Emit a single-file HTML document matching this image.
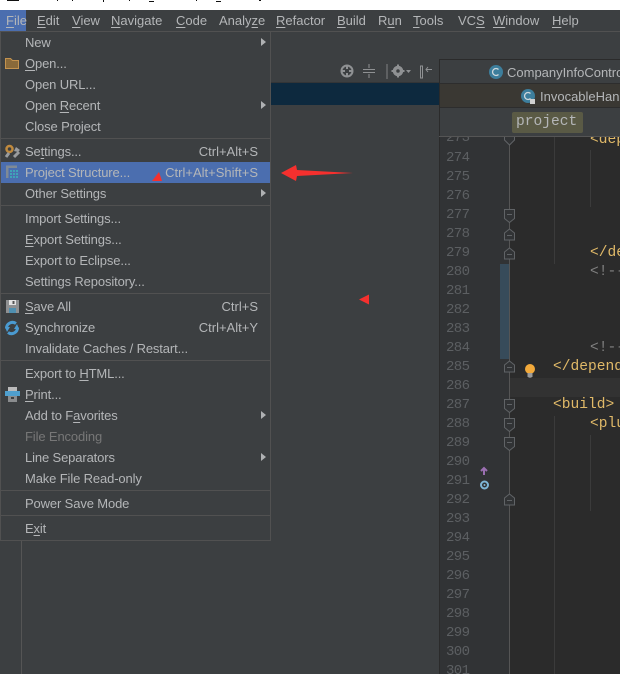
<!DOCTYPE html>
<html><head><meta charset="utf-8"><style>
html,body{margin:0;padding:0;background:#3c3f41}
#p{position:relative;width:620px;height:674px;overflow:hidden;background:#3c3f41;font-family:"Liberation Sans",sans-serif;font-size:13px;color:#b4b6b8}
#p div{position:absolute}
.m{top:13px;line-height:16px;white-space:nowrap}
.i{left:25px;line-height:16px;white-space:nowrap;letter-spacing:-.13px}
.r{line-height:16px;white-space:nowrap}
.s{left:1px;width:269px;height:1px;background:#515151}
.a{left:261px;width:0;height:0;border-left:5px solid #afb1b3;border-top:4px solid transparent;border-bottom:4px solid transparent}
u{text-underline-offset:2px}
.n{left:446px;width:30px;font:14px/19px "Liberation Mono",monospace;letter-spacing:-.6px;color:#5c5f62;height:19px}
.c{font:14.6px/19px "Liberation Mono",monospace;color:#e0b968;white-space:pre;height:19px}
.g{color:#808080}
.k{background:#111;height:1px}
</style></head><body><div id="p">
<div style="left:0;top:0;width:620px;height:10px;background:#fff"></div>
<div class="k" style="left:7px;top:0;width:12px"></div>
<div class="k" style="left:57px;top:0;width:1px"></div>
<div class="k" style="left:72px;top:0;width:1px"></div>
<div class="k" style="left:103px;top:0;width:1px;height:2px"></div>
<div class="k" style="left:129px;top:0;width:1px"></div>
<div class="k" style="left:149px;top:1px;width:5px"></div>
<div class="k" style="left:196px;top:0;width:1px"></div>
<div class="k" style="left:216px;top:1px;width:5px"></div>
<div class="k" style="left:259px;top:0;width:2px"></div>
<div style="left:0;top:10px;width:26px;height:21px;background:#4b6eaf"></div>
<div style="left:0;top:31px;width:620px;height:1px;background:#515151"></div>
<div class="m" style="left:6px"><u>F</u>ile</div>
<div class="m" style="left:37px"><u>E</u>dit</div>
<div class="m" style="left:72px"><u>V</u>iew</div>
<div class="m" style="left:111px"><u>N</u>avigate</div>
<div class="m" style="left:176px"><u>C</u>ode</div>
<div class="m" style="left:219px">Analy<u>z</u>e</div>
<div class="m" style="left:276px"><u>R</u>efactor</div>
<div class="m" style="left:337px"><u>B</u>uild</div>
<div class="m" style="left:378px">R<u>u</u>n</div>
<div class="m" style="left:413px"><u>T</u>ools</div>
<div class="m" style="left:458px">VC<u>S</u></div>
<div class="m" style="left:493px"><u>W</u>indow</div>
<div class="m" style="left:552px"><u>H</u>elp</div>

<!-- toolbar and dark selected row -->
<div style="left:270px;top:82px;width:170px;height:1px;background:#333537"></div>
<div style="left:271px;top:83px;width:168px;height:22px;background:#0d293e"></div>
<svg style="position:absolute;left:335px;top:60px" width="100" height="22" fill="none" stroke="#8f9193" stroke-width="2">
<circle cx="12" cy="11" r="5.500"/><path d="M12 6v3M12 13v3M7 11h3M14 11h3"/>
<path stroke-width="1" d="M28 9.500h12M28 12.500h12M34 4v4M34 14v4"/>
<path d="M52 4v15" stroke="#5e6062"/>
<circle cx="63" cy="11" r="3.500" stroke-width="3.500"/><path d="M63 4.500v2M63 15.500v2M56.500 11h2M67.500 11h2"/>
<path d="M71 10h5l-2.500 3z" fill="#8f9193" stroke="none"/>
<path stroke-width="1" d="M85.500 6v12h2v-12zM97 9.500h-6M93 7l-2 2.500 2 2.500"/>
</svg>

<!-- editor -->
<div style="left:439px;top:59px;width:1px;height:615px;background:#2b2b2b"></div>
<div style="left:440px;top:59px;width:180px;height:24px;background:#3c3f41;border-top:1px solid #2b2b2b"></div>
<div style="left:440px;top:83px;width:180px;height:25px;background:#3a3833;border-top:1px solid #2d2d2d;border-bottom:1px solid #2d2d2d;box-sizing:border-box"></div>
<div style="left:440px;top:137px;width:70px;height:537px;background:#313335"></div>
<div style="left:510px;top:137px;width:110px;height:537px;background:#2b2b2b"></div>
<div style="left:510px;top:378px;width:110px;height:19px;background:#323232"></div>
<div style="left:500px;top:264px;width:9px;height:95px;background:#374b5a"></div>
<div style="left:509px;top:137px;width:1px;height:537px;background:#555"></div>
<div style="left:554px;top:137px;width:1px;height:127px;background:#3b3b3b"></div>
<div style="left:554px;top:416px;width:1px;height:258px;background:#3b3b3b"></div>
<div style="left:590px;top:150px;width:1px;height:57px;background:#3b3b3b"></div>
<div style="left:590px;top:435px;width:1px;height:76px;background:#3b3b3b"></div>

<svg style="position:absolute;left:480px;top:60px" width="60" height="50">
<circle cx="16" cy="12" r="7" fill="#3d7e9c"/><path d="M18.500 9.500a3.500 3.500 0 1 0 0 5" fill="none" stroke="#cfd8dc" stroke-width="1.300"/>
<circle cx="48" cy="36" r="7" fill="#3d7e9c"/><path d="M50.500 33.500a3.500 3.500 0 1 0 0 5" fill="none" stroke="#cfd8dc" stroke-width="1.300"/>
<rect x="50" y="39" width="5" height="5" fill="#d0d0d0"/>
</svg>
<div style="left:507px;top:65px;line-height:16px;white-space:nowrap;width:113px;overflow:hidden">CompanyInfoControl</div>
<div style="left:540px;top:89px;line-height:16px;white-space:nowrap;width:80px;overflow:hidden">InvocableHandler</div>

<div class="n" style="top:129px">273</div>
<div class="n" style="top:149px">274</div><div class="n" style="top:168px">275</div><div class="n" style="top:187px">276</div>
<div class="n" style="top:206px">277</div><div class="n" style="top:225px">278</div><div class="n" style="top:244px">279</div>
<div class="n" style="top:263px">280</div><div class="n" style="top:282px">281</div><div class="n" style="top:301px">282</div>
<div class="n" style="top:320px">283</div><div class="n" style="top:339px">284</div><div class="n" style="top:358px">285</div>
<div class="n" style="top:377px">286</div><div class="n" style="top:396px">287</div><div class="n" style="top:415px">288</div>
<div class="n" style="top:434px">289</div><div class="n" style="top:453px">290</div><div class="n" style="top:472px">291</div>
<div class="n" style="top:491px">292</div><div class="n" style="top:510px">293</div><div class="n" style="top:529px">294</div>
<div class="n" style="top:548px">295</div><div class="n" style="top:567px">296</div><div class="n" style="top:586px">297</div>
<div class="n" style="top:605px">298</div><div class="n" style="top:624px">299</div><div class="n" style="top:643px">300</div>
<div class="n" style="top:662px">301</div>

<div class="c" style="left:590px;top:131px">&lt;dep</div>
<div class="c" style="left:590px;top:244px">&lt;/de</div>
<div class="c g" style="left:590px;top:263px">&lt;!--</div>
<div class="c g" style="left:590px;top:339px">&lt;!--</div>
<div class="c" style="left:553px;top:358px">&lt;/depend</div>
<div class="c" style="left:553px;top:396px">&lt;build&gt;</div>
<div class="c" style="left:590px;top:415px">&lt;plu</div>

<!-- breadcrumb sits above the scrolled code -->
<div style="left:440px;top:108px;width:180px;height:28px;background:#3c3f41"></div>
<div style="left:439px;top:136px;width:181px;height:1px;background:#555"></div>
<div style="left:512px;top:112px;width:71px;height:21px;background:#5a5a45;border-radius:2px"></div>
<div style="left:516px;top:113px;font:14.6px/19px 'Liberation Mono',monospace;color:#b4b6b8">project</div>

<svg style="position:absolute;left:475px;top:130px" width="50" height="380" fill="#313335" stroke="#606366">
<path d="M29.500 7v3l5 5 5-5V7"/>
<path d="M29.500 79.500h10v9l-5 4-5-4zM32 84.500h5"/>
<path d="M34.500 99l5 4v7h-10v-7zM32 105.500h5"/>
<path d="M34.500 118l5 4v7h-10v-7zM32 124.500h5"/>
<path d="M34.500 231l5 4v7h-10v-7zM32 237.500h5"/>
<path d="M29.500 269.500h10v9l-5 4-5-4zM32 274.500h5"/>
<path d="M29.500 288.500h10v9l-5 4-5-4zM32 293.500h5"/>
<path d="M29.500 307.500h10v9l-5 4-5-4zM32 312.500h5"/>
<path d="M34.500 364l5 4v7h-10v-7zM32 370.500h5"/>
<path d="M9 345v-6M6 341l3-3 3 3" fill="none" stroke="#9a6fb0" stroke-width="2"/>
<circle cx="9.500" cy="355" r="3.500" fill="none" stroke="#7fb6d6" stroke-width="2"/><circle cx="9.500" cy="355" r="1" fill="#7fb6d6" stroke="none"/>
</svg>
<svg style="position:absolute;left:522px;top:362px" width="16" height="18">
<circle cx="8" cy="7" r="5" fill="#f2a93b"/><rect x="5.500" y="11" width="5" height="4" fill="#9a9a9a"/><rect x="6.500" y="15" width="3" height="1" fill="#777"/>
</svg>

<div style="left:21px;top:540px;width:1px;height:134px;background:#555"></div>
<!-- menu -->
<div style="left:0;top:31px;width:269px;height:508px;background:#3c3f41;border:1px solid #515151"></div>
<div class="i" style="top:35px">New</div><div class="a" style="top:38px"></div>
<div class="i" style="top:56px"><u>O</u>pen...</div>
<div class="i" style="top:77px">Open URL...</div>
<div class="i" style="top:98px">Open <u>R</u>ecent</div><div class="a" style="top:101px"></div>
<div class="i" style="top:119px">Close Project</div>
<div class="s" style="top:138px"></div>
<div class="i" style="top:144px">Se<u>t</u>tings...</div><div class="r" style="top:144px;right:362px">Ctrl+Alt+S</div>
<div style="left:1px;top:162px;width:269px;height:21px;background:#4b6eaf"></div>
<div class="i" style="top:165px">Project Structure...</div><div class="r" style="top:165px;right:362px">Ctrl+Alt+Shift+S</div>
<div class="i" style="top:186px">Other Settings</div><div class="a" style="top:189px"></div>
<div class="s" style="top:205px"></div>
<div class="i" style="top:211px">Import Settings...</div>
<div class="i" style="top:232px"><u>E</u>xport Settings...</div>
<div class="i" style="top:253px">Export to Eclipse...</div>
<div class="i" style="top:274px">Settings Repository...</div>
<div class="s" style="top:293px"></div>
<div class="i" style="top:299px"><u>S</u>ave All</div><div class="r" style="top:299px;right:362px">Ctrl+S</div>
<div class="i" style="top:320px">S<u>y</u>nchronize</div><div class="r" style="top:320px;right:362px">Ctrl+Alt+Y</div>
<div class="i" style="top:341px">Invalidate Caches / Restart...</div>
<div class="s" style="top:360px"></div>
<div class="i" style="top:366px">Export to <u>H</u>TML...</div>
<div class="i" style="top:387px"><u>P</u>rint...</div>
<div class="i" style="top:408px">Add to F<u>a</u>vorites</div><div class="a" style="top:411px"></div>
<div class="i" style="top:429px;color:#777">File Encoding</div>
<div class="i" style="top:450px">Line Separators</div><div class="a" style="top:453px"></div>
<div class="i" style="top:471px">Make File Read-only</div>
<div class="s" style="top:490px"></div>
<div class="i" style="top:496px">Power Save Mode</div>
<div class="s" style="top:515px"></div>
<div class="i" style="top:521px">E<u>x</u>it</div>

<svg style="position:absolute;left:0;top:0" width="24" height="410">
<!-- open -->
<path d="M5.500 58.500h5l2 2h6v8h-13z" fill="#8a6a3a" stroke="#c4934f"/>
<!-- settings -->
<path d="M14 157l5-5" stroke="#9a9c9e" stroke-width="3" fill="none"/>
<path d="M16 147l4 3-2 2-4-1z" fill="#9a9c9e"/>
<circle cx="9.500" cy="149" r="3" fill="none" stroke="#c08a3e" stroke-width="2.500"/>
<path d="M6 157l3-4" stroke="#9a9c9e" stroke-width="3"/>
<!-- project structure -->
<path d="M6 178v-12.500h11v2.500H8.500v10z" fill="#7f8a96"/>
<g fill="#3fa3b8"><rect x="10" y="170" width="2" height="2"/><rect x="13" y="170" width="2" height="2"/><rect x="16" y="170" width="2" height="2"/><rect x="10" y="173" width="2" height="2"/><rect x="13" y="173" width="2" height="2"/><rect x="16" y="173" width="2" height="2"/><rect x="10" y="176" width="2" height="2"/><rect x="13" y="176" width="2" height="2"/><rect x="16" y="176" width="2" height="2"/></g>
<!-- save -->
<path d="M6 300h13v13H6z" fill="#8e9092"/><rect x="9" y="300" width="7" height="5" fill="#e2e2e2"/><rect x="12.500" y="301" width="2" height="3" fill="#555"/><rect x="9" y="308" width="7" height="5" fill="#4f8fb0"/>
<!-- sync -->
<path d="M16 323.500a6 6 0 0 0-9.500 5" fill="none" stroke="#4a9ad0" stroke-width="3"/>
<path d="M8 332.500a6 6 0 0 0 9.500-5" fill="none" stroke="#4a9ad0" stroke-width="3"/>
<path d="M5 327h5l-3 5zM19 329h-5l3-5z" fill="#4a9ad0"/>
<!-- print -->
<rect x="8" y="387" width="9" height="4" fill="#bbb"/><rect x="5" y="391" width="15" height="5" fill="#4f9fce"/><rect x="8" y="396" width="9" height="6" fill="#8a8c8e"/><rect x="11" y="397" width="3" height="2" fill="#3c3f41"/>
</svg>
<svg style="position:absolute;left:0;top:0" width="620" height="674">
<path d="M281 173l15-8 1 5 56 3-56 3-1 5z" fill="#f5302e"/>
<path d="M152 181L159 172 162 181z" fill="#f5302e"/>
<path d="M359 299.500l10-5v10z" fill="#f5302e"/>
</svg>
</div></body></html>
